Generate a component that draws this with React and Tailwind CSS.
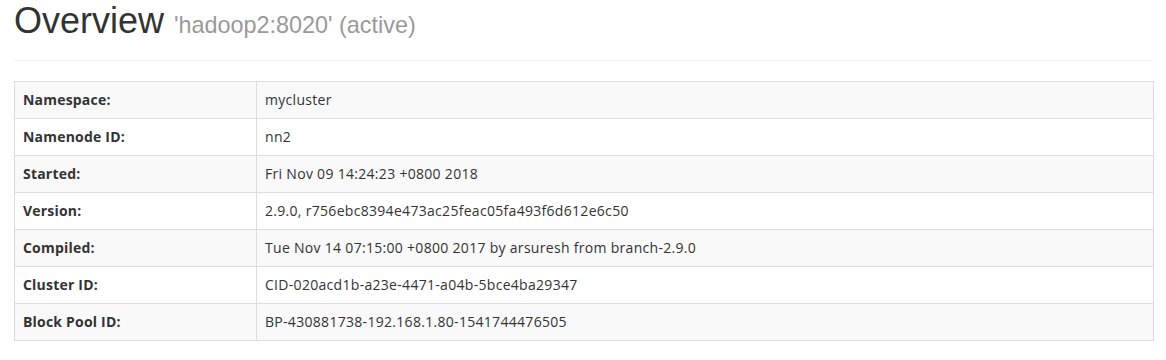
export default function App() {
  const rows = [
    ["Namespace:", "mycluster"],
    ["Namenode ID:", "nn2"],
    ["Started:", "Fri Nov 09 14:24:23 +0800 2018"],
    ["Version:", "2.9.0, r756ebc8394e473ac25feac05fa493f6d612e6c50"],
    ["Compiled:", "Tue Nov 14 07:15:00 +0800 2017 by arsuresh from branch-2.9.0"],
    ["Cluster ID:", "CID-020acd1b-a23e-4471-a04b-5bce4ba29347"],
    ["Block Pool ID:", "BP-430881738-192.168.1.80-1541744476505"],
  ];
  return (
    <div className="w-[1166px] h-[360px] bg-white overflow-hidden px-[14px] pt-px text-[#333]">
      <div className="pb-[9px] border-b border-[#eee] mb-5">
        <h1 className="text-[36px] leading-[39.6px] h-[39.6px] mb-[10px] font-normal font-['Liberation_Sans',Arial,sans-serif]">
          Overview{" "}
          <span className="text-[23.4px] leading-none text-[#999]">'hadoop2:8020' (active)</span>
        </h1>
      </div>
      <table className="w-[1140px] border-collapse border border-[#ddd] text-[14px] leading-5 font-['Open_Sans',sans-serif]">
        <tbody>
          {rows.map(([k, v], i) => (
            <tr key={k} className={i % 2 === 0 ? "bg-[#f9f9f9]" : "bg-white"}>
              <th className="w-[242px] border border-[#ddd] p-2 text-left font-bold tracking-[0.2px]">{k}</th>
              <td className="border border-[#ddd] p-2 tracking-[0.3px]">{v}</td>
            </tr>
          ))}
        </tbody>
      </table>
    </div>
  );
}
